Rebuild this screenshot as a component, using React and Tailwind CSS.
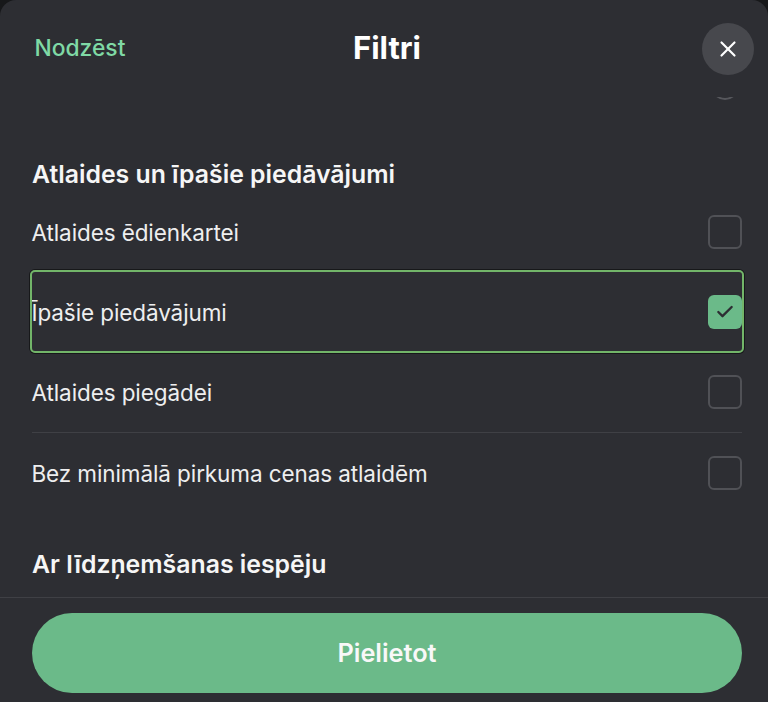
import { Check, X } from "lucide-react";

const rows = [
  { label: "Atlaides ēdienkartei" },
  { label: "Īpašie piedāvājumi", checked: true, focused: true },
  { label: "Atlaides piegādei", divider: true },
  { label: "Bez minimālā pirkuma cenas atlaidēm" },
];

function FilterRow({ label, checked, focused, divider }) {
  return (
    <div className={`relative flex h-[80.33px] items-center justify-between ${divider ? "border-b border-[#3f4045]" : ""}`}>
      {focused && (
        <div className="absolute -inset-x-[2px] top-[-2px] bottom-[0px] rounded-[5px] border-[2.5px] border-[#72b569] shadow-[0_0_0_1px_#17181a]" />
      )}
      <span className="-ml-[0.5px] pt-[0.5px] text-[22.5px] tracking-[-0.1px] text-[#eeeeef]">{label}</span>
      {checked ? (
        <span className="relative flex h-[34px] w-[34px] items-center justify-center rounded-[6px] bg-[#6bba89]">
          <Check size={20} strokeWidth={2.8} className="text-[#2d2e33]" />
        </span>
      ) : (
        <span className="h-[34px] w-[34px] rounded-[6px] border-[2.5px] border-[#505156]" />
      )}
    </div>
  );
}

export default function App() {
  return (
    <div className="h-[702px] w-[768px] overflow-hidden bg-[#17181a] font-['Inter',sans-serif]">
      <div className="flex h-[702px] flex-col rounded-t-[16px] bg-[#2d2e33]">
        <header className="grid h-[97px] shrink-0 grid-cols-[1fr_auto_1fr] items-center pl-[32px] pr-[26px] pb-[1px]">
          <button className="pl-[2.5px] text-left text-[22.8px] font-medium text-[#7fd9a5]">Nodzēst</button>
          <h1 className="text-[31px] font-bold text-white">Filtri</h1>
          <button className="mt-[2px] -mr-[12px] flex h-[52px] w-[52px] items-center justify-center justify-self-end rounded-full bg-[#47484d] text-white">
            <X size={26} strokeWidth={2} />
          </button>
        </header>

        <div className="min-h-0 flex-1 overflow-hidden pl-[32px] pr-[26px]">
          <div className="relative h-[3px]">
            <span className="absolute -top-[31px] right-[3px] h-[34px] w-[28px] rounded-full border-2 border-[#56575c]" />
          </div>
          <h2 className="mt-[58px] text-[24.8px] leading-[32px] font-semibold text-[#f6f6f6]">
            Atlaides un īpašie piedāvājumi
          </h2>
          <div className="mt-[2px]">
            {rows.map((row) => (
              <FilterRow key={row.label} {...row} />
            ))}
          </div>
          <h2 className="mt-[35px] text-[24.8px] leading-[32px] font-semibold text-[#f6f6f6]">
            Ar līdzņemšanas iespēju
          </h2>
        </div>

        <footer className="h-[105px] shrink-0 border-t border-[#3f4045] pt-[15px] pl-[32px] pr-[26px]">
          <button className="flex h-[80px] w-full items-center justify-center rounded-full bg-[#6bba89] text-[25.3px] font-semibold text-[#f8f8f8]">
            Pielietot
          </button>
        </footer>
      </div>
    </div>
  );
}
